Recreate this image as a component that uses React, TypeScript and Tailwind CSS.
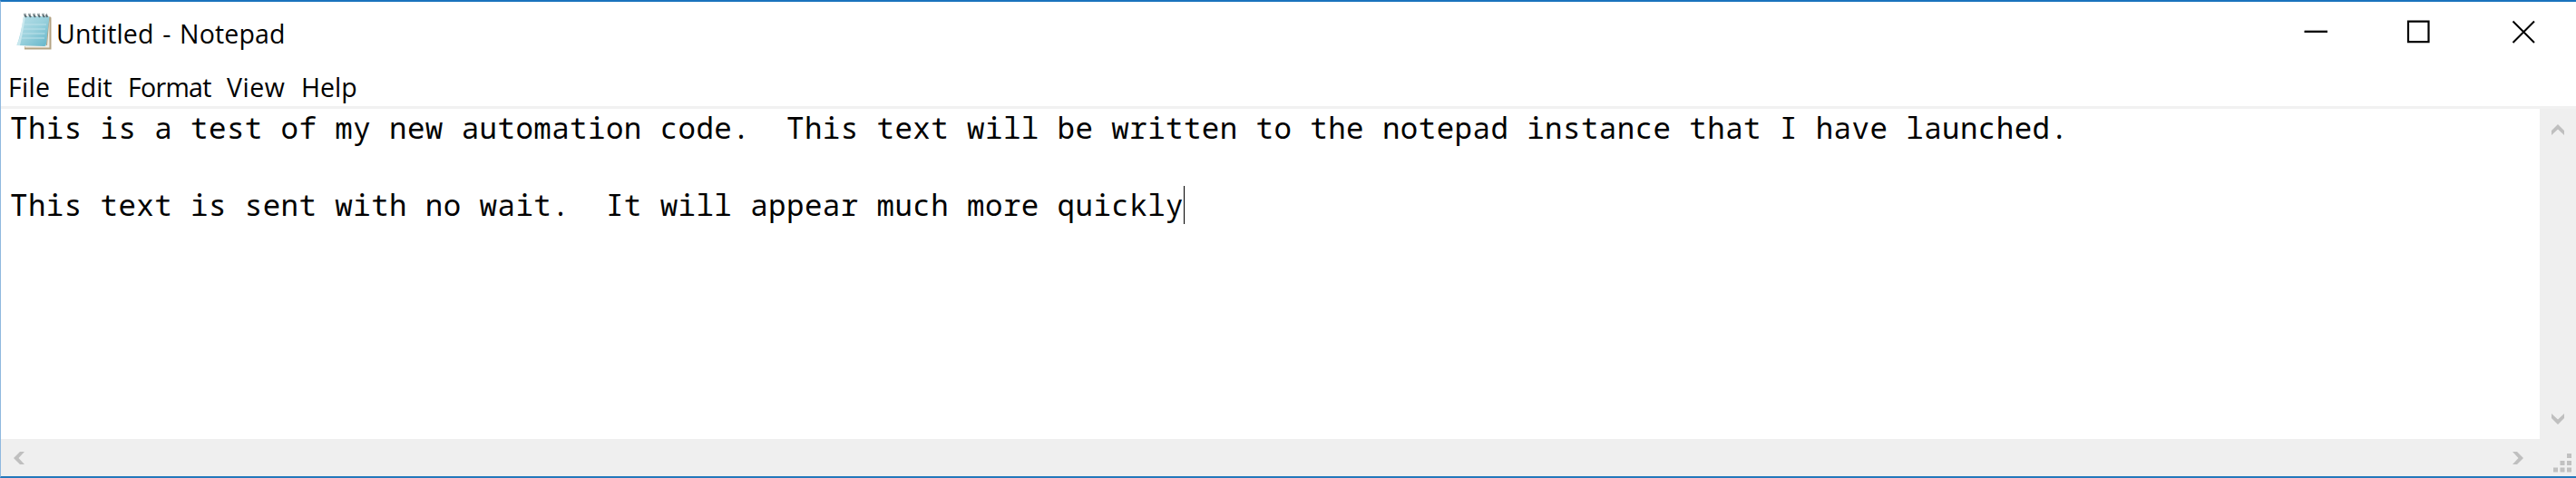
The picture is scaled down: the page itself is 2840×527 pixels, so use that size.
const MENU = [
  { label: 'File', style: 'w-[64px] tracking-[0.3px]' },
  { label: 'Edit', style: 'w-[68px]' },
  { label: 'Format', style: 'w-[109px] tracking-[-0.7px]' },
  { label: 'View', style: 'w-[82px] tracking-[0.5px]' },
  { label: 'Help', style: 'w-[70px]' },
];

function NotepadIcon() {
  return (
    <svg width="40" height="42" viewBox="0 0 40 42">
      <defs>
        <linearGradient id="page" x1="0" y1="0" x2="1" y2="1">
          <stop offset="0" stopColor="#b9dfe8" />
          <stop offset="0.5" stopColor="#98d0dc" />
          <stop offset="1" stopColor="#62b5c9" />
        </linearGradient>
      </defs>
      <path d="M34 4.500H37.500Q38.500 4.500 38.500 6V40.500H9V37H33Z" fill="#b4a383" />
      <path d="M9.500 36H34L36.500 7V38.500H9.500Z" fill="#f1eee5" />
      <path d="M8 4H35.500Q36.500 4 36.300 6L33 34.500Q32.800 37 31 37L0.500 36Q5 24 8 4Z" fill="url(#page)" />
      <path d="M8 4L5.500 19Q4 28 0.500 36L4 36Q7 24 10 4Z" fill="#d5edf2" opacity="0.8" />
      <path d="M8.500 13H33M7.500 18H32M6.500 23H31.500M5.500 28H31" stroke="#bde1e9" strokeWidth="1" />
      <path d="M9 2L11 5M14 2L16 5M19 2L21 5M24 2L26 5M29 2L31 5M33 2L34 5" stroke="#596a70" strokeWidth="2.200" />
      <path d="M8 1.500H34" stroke="#a9b3b6" strokeWidth="1.500" strokeDasharray="3 2" />
    </svg>
  );
}

function Chevron({ rotate }: { rotate: string }) {
  return (
    <svg width="14" height="12" viewBox="0 0 14 12" className={rotate}>
      <path d="M0 7L7 0L14 7V12L7 5.500L0 12Z" fill="#bfbfbf" />
    </svg>
  );
}

export default function App() {
  return (
    <div className="flex h-[527px] w-[2840px] flex-col overflow-hidden border-y-2 border-l border-t-[#1a73bd] border-b-[#2478bb] border-l-[#8fb8df] bg-white font-['Open_Sans','Noto_Sans',sans-serif] text-black">
      <header className="flex h-[70px] shrink-0 items-start justify-between">
        <div className="flex pl-[17px] pt-[12px]">
          <NotepadIcon />
          <span className="ml-[4px] mt-[3px] whitespace-pre text-[28.500px] leading-[40px] tracking-[0.150px] [word-spacing:2px]">Untitled - Notepad</span>
        </div>
        <svg width="300" height="60" viewBox="0 0 300 60" fill="none" stroke="#000">
          <path d="M0.500 32.800H26" strokeWidth="2.300" />
          <path d="M115 21.700H137.500V44.200H115Z" strokeWidth="2.200" />
          <path d="M230.500 21.500L254 45M254 21.500L230.500 45" strokeWidth="2" />
        </svg>
      </header>
      <nav className="flex h-[45px] shrink-0 pl-[8px] pt-[4px] text-[28.500px] leading-[40px]">
        {MENU.map((item) => (
          <span key={item.label} className={`${item.style} shrink-0`}>{item.label}</span>
        ))}
      </nav>
      <main className="flex h-[367px] shrink-0 border-t-[3px] border-[#f1f1f1]">
        <section className="flex grow flex-col whitespace-pre pl-[10px] font-['Noto_Sans_Mono','Liberation_Mono',monospace] text-[32.500px] leading-[42.300px] tracking-[0.407px]">
          <p>This is a test of my new automation code.  This text will be written to the notepad instance that I have launched.</p>
          <p> </p>
          <div className="flex">
            <p>This text is sent with no wait.  It will appear much more quickly</p>
            <span className="h-[42px] w-px bg-black" />
          </div>
        </section>
        <aside className="flex w-[40px] shrink-0 flex-col items-center justify-between bg-[#efefef] pb-[16px] pt-[17px]">
          <Chevron rotate="rotate-0" />
          <Chevron rotate="rotate-180" />
        </aside>
      </main>
      <footer className="flex grow justify-between bg-[#efefef]">
        <div className="pl-[13px] pt-[15px]"><Chevron rotate="-rotate-90" /></div>
        <div className="flex">
          <div className="pt-[15px]"><Chevron rotate="rotate-90" /></div>
          <svg width="57" height="41" viewBox="0 0 57 41" fill="#c1c1c1">
            <path d="M47 16h5v5h-5zM39.500 24h5v5h-5zM47 24h5v5h-5zM32 31.500h5v5h-5zM39.500 31.500h5v5h-5zM47 31.500h5v5h-5z" />
          </svg>
        </div>
      </footer>
    </div>
  );
}
